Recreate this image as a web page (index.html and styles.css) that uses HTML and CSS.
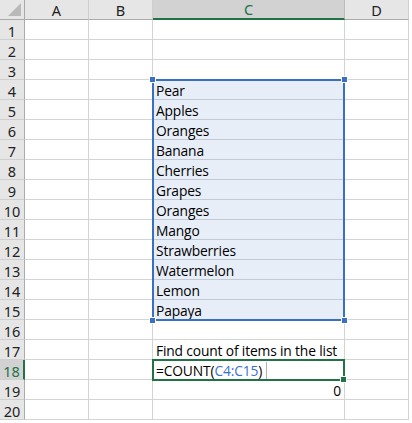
FILE: index.html
```html
<!DOCTYPE html>
<html>
<head>
<meta charset="utf-8">
<link rel="stylesheet" href="styles.css">
</head>
<body>
<div class="sheet">
  <div class="grid">
    <div class="hd corner"><span class="tri"></span></div>
    <div class="hd col">A</div>
    <div class="hd col">B</div>
    <div class="hd col sel">C</div>
    <div class="hd col">D</div>

    <div class="hd row">1</div><div class="c"></div><div class="c"></div><div class="c"></div><div class="c"></div>
    <div class="hd row">2</div><div class="c"></div><div class="c"></div><div class="c"></div><div class="c"></div>
    <div class="hd row">3</div><div class="c"></div><div class="c"></div><div class="c"></div><div class="c"></div>
    <div class="hd row">4</div><div class="c"></div><div class="c"></div><div class="c rng">Pear</div><div class="c"></div>
    <div class="hd row">5</div><div class="c"></div><div class="c"></div><div class="c rng">Apples</div><div class="c"></div>
    <div class="hd row">6</div><div class="c"></div><div class="c"></div><div class="c rng">Oranges</div><div class="c"></div>
    <div class="hd row">7</div><div class="c"></div><div class="c"></div><div class="c rng">Banana</div><div class="c"></div>
    <div class="hd row">8</div><div class="c"></div><div class="c"></div><div class="c rng">Cherries</div><div class="c"></div>
    <div class="hd row">9</div><div class="c"></div><div class="c"></div><div class="c rng">Grapes</div><div class="c"></div>
    <div class="hd row">10</div><div class="c"></div><div class="c"></div><div class="c rng">Oranges</div><div class="c"></div>
    <div class="hd row">11</div><div class="c"></div><div class="c"></div><div class="c rng">Mango</div><div class="c"></div>
    <div class="hd row">12</div><div class="c"></div><div class="c"></div><div class="c rng">Strawberries</div><div class="c"></div>
    <div class="hd row">13</div><div class="c"></div><div class="c"></div><div class="c rng">Watermelon</div><div class="c"></div>
    <div class="hd row">14</div><div class="c"></div><div class="c"></div><div class="c rng">Lemon</div><div class="c"></div>
    <div class="hd row">15</div><div class="c"></div><div class="c"></div><div class="c rng">Papaya</div><div class="c"></div>
    <div class="hd row">16</div><div class="c"></div><div class="c"></div><div class="c"></div><div class="c"></div>
    <div class="hd row">17</div><div class="c"></div><div class="c"></div><div class="c over">Find count of items in the list</div><div class="c"></div>
    <div class="hd row sel-row">18</div><div class="c"></div><div class="c"></div><div class="c"><span>=COUNT(</span><span class="ref">C4:C15</span><span>)</span><span class="caret"></span></div><div class="c"></div>
    <div class="hd row">19</div><div class="c"></div><div class="c"></div><div class="c num">0</div><div class="c"></div>
    <div class="hd row">20</div><div class="c"></div><div class="c"></div><div class="c"></div><div class="c"></div>
  </div>

  <div class="range">
    <span class="h tl"></span><span class="h tr"></span><span class="h bl"></span><span class="h br"></span>
  </div>
  <div class="active"><span class="fill"></span></div>
</div>
</body>
</html>
```

FILE: styles.css
```css
html, body {
  margin: 0;
  padding: 0;
  background: #ffffff;
}

.sheet {
  position: relative;
  width: 412px;
  height: 423px;
  overflow: hidden;
}

.grid {
  display: grid;
  grid-template-columns: 25px 64px 64px 192px 64px;
  grid-auto-rows: 20px;
  width: 409px;
}

.c {
  box-sizing: border-box;
  border-right: 1px solid #d4d4d4;
  border-bottom: 1px solid #d4d4d4;
  font-family: "Open Sans", "Liberation Sans", sans-serif;
  font-size: 13.8px;
  letter-spacing: -0.15px;
  color: #000;
  display: flex;
  align-items: flex-end;
  padding: 0 0 0 3px;
  line-height: 17px;
  white-space: nowrap;
}

.c.rng {
  background: #e8eef8;
  border-bottom-color: #c4cad4;
}

.c.over {
  overflow: visible;
}

.c.num {
  justify-content: flex-end;
  padding-right: 3px;
}

.ref {
  color: #3a72d0;
}

.caret {
  display: inline-block;
  width: 1px;
  height: 17px;
  background: #b0b0b0;
  margin-left: 4px;
  align-self: flex-end;
}

.hd {
  box-sizing: border-box;
  background: #e6e6e6;
  color: #222;
  font-family: "Noto Sans", "Open Sans", sans-serif;
  font-size: 14.5px;
  display: flex;
  align-items: center;
  justify-content: center;
  line-height: 18px;
}

.hd.col {
  border-right: 1px solid #cfcfcf;
  border-bottom: 1px solid #ababab;
}

.hd.col.sel {
  background: #d2d2d2;
  color: #217346;
  border-bottom: 2px solid #217346;
  border-right-color: #bcbcbc;
}

.hd.corner {
  border-right: 1px solid #ababab;
  border-bottom: 1px solid #ababab;
  position: relative;
}

.tri {
  position: absolute;
  right: 3px;
  bottom: 3px;
  width: 0;
  height: 0;
  border-left: 13px solid transparent;
  border-bottom: 13px solid #b9b9b9;
}

.hd.row {
  border-right: 1px solid #ababab;
  border-bottom: 1px solid #cfcfcf;
  padding-top: 2px;
}

.hd.row.sel-row {
  background: #d2d2d2;
  color: #217346;
  border-right: 2px solid #217346;
}

.range {
  position: absolute;
  left: 152px;
  top: 79px;
  width: 193px;
  height: 242px;
  box-sizing: border-box;
  border: 2px solid #3a6fc8;
}

.h {
  position: absolute;
  width: 5px;
  height: 5px;
  background: #3a6fc8;
  border: 1px solid #fff;
}

.h.tl { left: -5px; top: -5px; }
.h.tr { right: -5px; top: -5px; }
.h.bl { left: -5px; bottom: -5px; }
.h.br { right: -5px; bottom: -5px; }

.active {
  position: absolute;
  left: 152px;
  top: 359px;
  width: 193px;
  height: 22px;
  box-sizing: border-box;
  border: 2px solid #217346;
}

.fill {
  position: absolute;
  right: -4px;
  bottom: -4px;
  width: 5px;
  height: 5px;
  background: #217346;
  border: 1px solid #fff;
}
```
